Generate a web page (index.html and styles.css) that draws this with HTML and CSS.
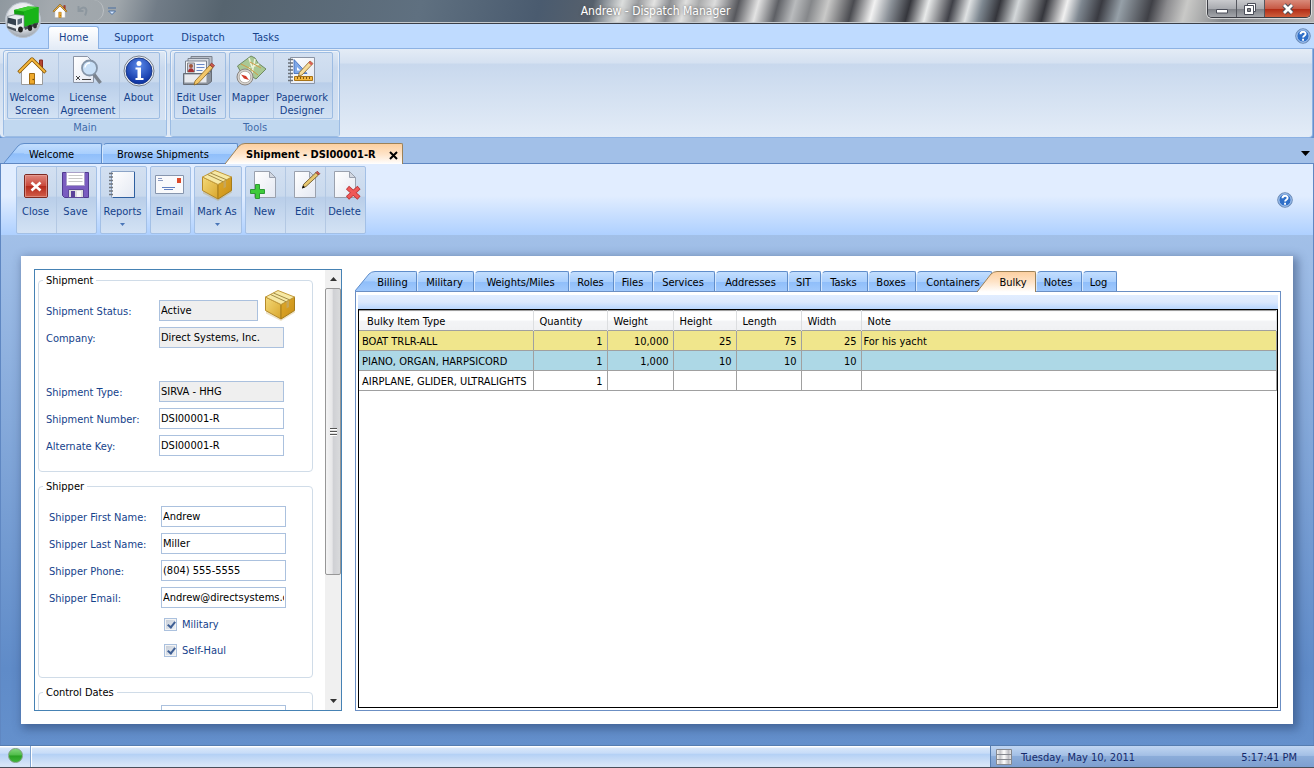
FILE: index.html
```html
<!DOCTYPE html>
<html lang="en">
<head>
    <meta charset="UTF-8">
    <meta name="viewport" content="width=device-width, initial-scale=1.0">
    <title>Andrew - Dispatch Manager</title>
    <link rel="stylesheet" href="styles.css">
</head>
<body>
    <!-- Shared icons and gradients -->
    <svg class="defs" aria-hidden="true">
        <defs>
            <linearGradient id="tabBlue" x1="0" y1="0" x2="0" y2="1">
                <stop offset="0" stop-color="#c3defe"/>
                <stop offset=".5" stop-color="#a9cffd"/>
                <stop offset=".52" stop-color="#8fbefa"/>
                <stop offset="1" stop-color="#9fc8fc"/>
            </linearGradient>
            <linearGradient id="tabOrange" x1="0" y1="0" x2="0" y2="1">
                <stop offset="0" stop-color="#fdd0a0"/>
                <stop offset=".5" stop-color="#fee3c7"/>
                <stop offset="1" stop-color="#ffffff"/>
            </linearGradient>
            <linearGradient id="gold" x1="0" y1="0" x2="1" y2="1">
                <stop offset="0" stop-color="#e0ab2c"/>
                <stop offset="1" stop-color="#c98f18"/>
            </linearGradient>
            <linearGradient id="goldSide" x1="0" y1="0" x2="1" y2="1">
                <stop offset="0" stop-color="#f3d978"/>
                <stop offset="1" stop-color="#d9a62c"/>
            </linearGradient>
            <linearGradient id="paper" x1="0" y1="0" x2="1" y2="1">
                <stop offset="0" stop-color="#ffffff"/>
                <stop offset="1" stop-color="#e4e8f2"/>
            </linearGradient>
            <linearGradient id="red" x1="0" y1="0" x2="0" y2="1">
                <stop offset="0" stop-color="#e08a80"/>
                <stop offset=".5" stop-color="#c9473a"/>
                <stop offset=".52" stop-color="#b52a1c"/>
                <stop offset="1" stop-color="#d2604c"/>
            </linearGradient>
            <radialGradient id="info" cx=".5" cy=".3" r=".7">
                <stop offset="0" stop-color="#5b8bea"/>
                <stop offset="1" stop-color="#0a2fa0"/>
            </radialGradient>
            <radialGradient id="orb" cx=".5" cy=".35" r=".65">
                <stop offset="0" stop-color="#ffffff"/>
                <stop offset=".6" stop-color="#e3e6ea"/>
                <stop offset="1" stop-color="#9aa2ac"/>
            </radialGradient>
        </defs>
        <symbol id="house" viewBox="0 0 32 32">
            <path d="M23.500 5h3v9h-3z" fill="#b5452f" stroke="#8a2a20"/>
            <path d="M5.500 16 16 5.500 26.500 16v13.500h-21z" fill="#fdfdfd" stroke="#9a9a9a"/>
            <path d="M2.500 17.500 16 4l13.500 13.500" fill="none" stroke="#8a5a08" stroke-width="3.400" stroke-linejoin="round"/>
            <path d="M3 17 16 4l13 13" fill="none" stroke="#f6b73c" stroke-width="1.800"/>
            <path d="M13.500 18.500h5V29h-5z" fill="#efa92b" stroke="#a06a10"/>
            <circle cx="17.200" cy="24.500" r=".8" fill="#6a4408"/>
        </symbol>
        <symbol id="box" viewBox="0 0 32 32">
            <path d="M16 1 31 8.500v14L17 31 2 23.500V9z" fill="#b98c1e" opacity=".25" transform="translate(0 1)"/>
            <path d="M1.500 8 17 15.500V30L1.500 21.500z" fill="url(#goldSide)" stroke="#b58a2a"/>
            <path d="M17 15.500 30.500 8v13.500L17 30z" fill="url(#gold)" stroke="#a67c1a"/>
            <path d="M1.500 8 14 1.500 30.500 8 17 15.500z" fill="#f7e9a4" stroke="#c39b3c"/>
            <path d="M6.500 5.500 22 12.700M9.500 4 25.500 10.800" stroke="#a08a48" fill="none"/>
            <path d="M22.500 13l2.500-1.400v6.400l-2.500 1.400z" fill="#c6a65a"/>
        </symbol>
        <symbol id="help" viewBox="0 0 16 16">
            <circle cx="8" cy="8" r="7.300" fill="#2f6fc8" stroke="#7893b8"/>
            <circle cx="8" cy="8" r="6.200" fill="none" stroke="#d5e4f8" stroke-width=".9"/>
            <path d="M5.500 6.200C5.500 3 10.600 3 10.600 6c0 1.800-2.500 1.900-2.500 3.600" fill="none" stroke="#fff" stroke-width="1.900"/>
            <path d="M7.100 10.800H9v1.900H7.100z" fill="#fff"/>
        </symbol>
        <symbol id="page" viewBox="0 0 32 32">
            <path d="M5.500 2.500h15l6 6v20h-21z" fill="url(#paper)" stroke="#9aa1ae"/>
            <path d="M20.500 2.500v6h6z" fill="#d3d8e1" stroke="#9aa1ae"/>
        </symbol>
        <symbol id="slantBlue" viewBox="0 0 20 20" preserveAspectRatio="none">
            <path d="M0 20 14 3Q16.500 .5 20 .5V20z" fill="url(#tabBlue)"/>
            <path d="M0 20 14 3Q16.500 .5 20 .5" fill="none" stroke="#5f8dca"/>
        </symbol>
        <symbol id="slantOrange" viewBox="0 0 20 21" preserveAspectRatio="none">
            <path d="M0 21 14 3Q16.500 .5 20 .5V21z" fill="url(#tabOrange)"/>
            <path d="M0 21 14 3Q16.500 .5 20 .5" fill="none" stroke="#9d8258"/>
        </symbol>
    </svg>

    <!-- Window title bar -->
    <header class="titlebar">
        <div class="quick-access">
            <button class="plain" aria-label="Home"><svg width="16" height="16"><use href="#house"/></svg></button>
            <button class="plain" aria-label="Undo"><svg width="16" height="16" viewBox="0 0 16 16"><path d="M3.500 3v5h5M4 7.500C8 2 14 4.500 10 12.500" fill="none" stroke="#8d979f" stroke-width="2"/></svg></button>
            <button class="plain more" aria-label="More"><svg width="8" height="8" viewBox="0 0 8 8"><path d="M0 1h8M.5 4h7L4 7.500z" fill="#d7e8ff" stroke="#4a6f9f"/></svg></button>
        </div>
        <h1>Andrew - Dispatch Manager</h1>
        <div class="caption">
            <button aria-label="Minimize"><svg width="14" height="14" viewBox="0 0 14 14"><path d="M1.500 7.500h11v3.500h-11z" fill="#fff" stroke="#4a4d58"/></svg></button>
            <button aria-label="Restore"><svg width="14" height="14" viewBox="0 0 14 14"><path d="M4.500 1.500h8v8h-8z" fill="#fff" stroke="#4a4d58"/><path d="M1.500 3.500h9v9h-9z" fill="#fff" stroke="#4a4d58"/><path d="M4.500 6.500h3v3h-3z" fill="#888" stroke="#4a4d58"/></svg></button>
            <button class="caption-close" aria-label="Close window"><svg width="14" height="12" viewBox="0 0 14 12"><path d="M3 2l8 8M11 2l-8 8" stroke="#4a4d58" stroke-width="4.800"/><path d="M3 2l8 8M11 2l-8 8" stroke="#fff" stroke-width="2.800"/></svg></button>
        </div>
    </header>
    <button class="orb" aria-label="Application menu">
        <svg width="38" height="38" viewBox="0 0 38 38">
            <circle cx="19" cy="19" r="17.500" fill="url(#orb)" stroke="#b9c2cc"/>
            <path d="M10 9 24 5.500 34.500 6v15.500L20 26l-9-3z" fill="#12a012"/>
            <path d="M10 9 24 5.500 34.500 6 20 10.500z" fill="#3fce35"/>
            <path d="M20 10.500 34.500 6v15.500L20 26z" fill="#18b418"/>
            <path d="M3.500 15.500 11 13.500l9 1v12.500l-7 3.500-9.500-4z" fill="#e9edf1" stroke="#7b858f" stroke-width=".7"/>
            <path d="M4 16.500 12 18.500v6L3.500 22z" fill="#35424f"/>
            <path d="M13.500 18.500l4.500-1.500v5l-4.500 2z" fill="#586878"/>
            <path d="M3.500 25l8.500 2.800v2.400l-8.500-3.200z" fill="#4b535c"/>
            <path d="M20 26l14-4.500v2L21 29z" fill="#444b52"/>
            <ellipse cx="16.500" cy="28.500" rx="2.400" ry="3" fill="#222"/>
            <ellipse cx="26" cy="27" rx="2.200" ry="3" fill="#222"/>
            <ellipse cx="31" cy="24.800" rx="2" ry="2.600" fill="#333"/>
        </svg>
    </button>

    <!-- Ribbon -->
    <nav class="ribbon-tabs">
        <a href="#" class="ribbon-tab selected">Home</a>
        <a href="#" class="ribbon-tab">Support</a>
        <a href="#" class="ribbon-tab">Dispatch</a>
        <a href="#" class="ribbon-tab">Tasks</a>
        <button class="plain ribbon-help" aria-label="Help"><svg width="16" height="16"><use href="#help"/></svg></button>
    </nav>
    <section class="ribbon">
        <div class="ribbon-group">
            <div class="clusters">
                <div class="cluster main-cluster">
                    <button class="tool"><svg class="icon"><use href="#house"/></svg>Welcome<br>Screen</button>
                    <button class="tool">
                        <svg class="icon" viewBox="0 0 32 32">
                            <path d="M1.500 1.500h14l6 6v20h-20z" fill="url(#paper)" stroke="#8b94a5"/>
                            <path d="M4 21l4 4m0-4-4 4" stroke="#444"/><path d="M10 24.500h9" stroke="#444"/>
                            <circle cx="17.500" cy="13" r="7.500" fill="#c9e0f7" stroke="#8595a8" stroke-width="1.800"/>
                            <path d="M13 12.500a5 5 0 0 1 5-4.500" fill="none" stroke="#fff" stroke-width="1.500"/>
                            <path d="M22 19.500 28.500 28" stroke="#7b838e" stroke-width="3.500"/>
                        </svg>License<br>Agreement</button>
                    <button class="tool">
                        <svg class="icon" viewBox="0 0 32 32">
                            <circle cx="16" cy="16" r="15" fill="#eef1f5" stroke="#77808c"/>
                            <circle cx="16" cy="16" r="13" fill="url(#info)" stroke="#1a3a8a"/>
                            <circle cx="16" cy="8.500" r="2.500" fill="#fff"/>
                            <path d="M12.500 12.500h5.500V23h2.500v2h-8v-2h2v-8.500h-2z" fill="#fff"/>
                        </svg>About</button>
                </div>
            </div>
            <div class="group-name">Main</div>
        </div>
        <div class="ribbon-group">
            <div class="clusters">
                <div class="cluster edit-cluster">
                    <button class="tool">
                        <svg class="icon" viewBox="0 0 32 32">
                            <path d="M8 1.500h21v13H8z" fill="#b8bec8" stroke="#7a828e"/>
                            <path d="M5 3.500h21v13H5z" fill="#d4d9e0" stroke="#7a828e"/>
                            <path d="M2.500 6h21v13h-21z" fill="#f5f7fa" stroke="#7a828e"/>
                            <path d="M4.500 8h7v9h-7z" fill="#ccd" stroke="#888"/>
                            <circle cx="8" cy="11" r="2" fill="#a0583a"/><path d="M5 17c0-5 6-5 6 0z" fill="#a83030"/>
                            <path d="M13.500 9.500h8M13.500 12.500h8M13.500 15.500h6" stroke="#6788c8"/>
                            <path d="M.5 18.500h26l2-4v12l-4 3H.5z" fill="#8b929c" stroke="#666d77"/>
                            <path d="M1.500 19.500h22v8h-22z" fill="#e8eaee"/>
                            <path d="M27 10l3 2.500-15 16-4 1.500 1-4z" fill="#f3c76a" stroke="#8a6520" stroke-width=".8"/>
                            <path d="M27 10l3 2.500 1.500-2-3-2.500z" fill="#d05a50" stroke="#8a3a30" stroke-width=".8"/>
                        </svg>Edit User<br>Details</button>
                </div>
                <div class="cluster map-cluster">
                    <button class="tool">
                        <svg class="icon" viewBox="0 0 32 32">
                            <path d="M2.500 11 16 1l4 2 3 5 8 6-10 10-5-3-7 2z" fill="#a9c894" stroke="#6f8a63"/>
                            <path d="M14 3l3 9 7-3M15 12l-4 9M20 4l-3 14" stroke="#eef3d8" fill="none" stroke-width="1.500"/>
                            <path d="M6 9l8 4 9 7M15 7l11 6" stroke="#cf9a45" fill="none"/>
                            <circle cx="10" cy="22" r="8" fill="#d5d2cf" stroke="#8a8580"/>
                            <circle cx="10" cy="22" r="5.800" fill="#fff" stroke="#b7b1aa"/>
                            <path d="M6 19.500l5 1.500 3 4-5-1.500z" fill="#d23a2a"/>
                        </svg>Mapper</button>
                    <button class="tool">
                        <svg class="icon" viewBox="0 0 32 32">
                            <path d="M4.500 2.500h24v26h-24z" fill="url(#paper)" stroke="#8b94a5"/>
                            <path d="M2 4.500h5M2 8h5M2 11.500h5M2 15h5M2 18.500h5M2 22h5M2 25.500h5" stroke="#6a7078" stroke-width="1.500"/>
                            <path d="M8 4.500v14h13z" fill="#7fa8e8" stroke="#3a68b8" stroke-width=".8"/><path d="M11 12v3.500h3.500z" fill="#fff"/>
                            <path d="M8.500 21.500h18v4h-18z" fill="#f5b840" stroke="#a87418"/>
                            <path d="M11.500 22v2M14.500 22v2M17.500 22v2M20.500 22v2M23.500 22v2" stroke="#805510"/>
                            <path d="M24 6l3 2.500-11 11.500-3.500 1 .8-3.500z" fill="#f6dc9a" stroke="#8a6520" stroke-width=".8"/><path d="M24 6l3 2.500-1.500 2-3-2.500z" fill="#d86058"/>
                        </svg>Paperwork<br>Designer</button>
                </div>
            </div>
            <div class="group-name">Tools</div>
        </div>
    </section>

    <!-- Document tabs -->
    <nav class="doc-tabs">
        <a href="#" class="tab slanted"><svg class="cap"><use href="#slantBlue"/></svg><span>Welcome</span></a>
        <a href="#" class="tab">Browse Shipments</a>
        <a href="#" class="tab slanted active"><svg class="cap"><use href="#slantOrange"/></svg><span>Shipment - DSI00001-R <svg class="tab-close" width="9" height="9" viewBox="0 0 9 9"><path d="M1 1l7 7M8 1 1 8" stroke="#000" stroke-width="2"/></svg></span></a>
        <button class="plain tab-list" aria-label="Open tabs"><svg width="9" height="5" viewBox="0 0 9 5"><path d="M0 0h9L4.500 5z"/></svg></button>
    </nav>

    <!-- Shipment toolbar -->
    <section class="toolbar">
        <div class="cluster two">
            <button class="tool">
                <svg class="icon" viewBox="0 0 32 32"><rect x="4.500" y="5.500" width="23" height="23" rx="1.500" fill="url(#red)" stroke="#7d2a22"/><rect x="5.500" y="6.500" width="21" height="21" fill="none" stroke="#eaa89e" stroke-opacity=".6"/><path d="M11.500 13.500l9 8M20.500 13.500l-9 8" stroke="#fff" stroke-width="2.600"/></svg>Close</button>
            <button class="tool">
                <svg class="icon" viewBox="0 0 32 32"><path d="M2.500 3.500h26v25h-24l-2-2z" fill="#7a5cc0" stroke="#4f3a8f"/><path d="M6.500 3.500h18v13h-18z" fill="#fff" stroke="#a9a0c8"/><path d="M8.500 6.500h14M8.500 9.500h14M8.500 12.500h14" stroke="#c8c8c8"/><path d="M8.500 20.500h15v8h-15z" fill="#ddd" stroke="#5d4a99"/><path d="M11 22h4v6h-4z" fill="#5a429a"/><path d="M17 22h4v6h-4z" fill="#f6f6f6"/></svg>Save</button>
        </div>
        <div class="cluster reports">
            <button class="tool">
                <svg class="icon" viewBox="0 0 32 32"><path d="M4.500 2.500h23v26h-23z" fill="url(#paper)" stroke="#8ba3c6"/><path d="M27.500 3v25.500H6" fill="none" stroke="#2e5f9f"/><path d="M2 4.500h4M2 8h4M2 11.500h4M2 15h4M2 18.500h4M2 22h4M2 25.500h4" stroke="#70767e" stroke-width="1.600"/></svg>Reports
                <svg class="arrow" viewBox="0 0 5 3"><path d="M0 0h5L2.500 3z" fill="#4a76b8"/></svg></button>
        </div>
        <div class="cluster email">
            <button class="tool">
                <svg class="icon" viewBox="0 0 32 32"><path d="M1.500 6.500h28v18h-28z" fill="#f9fafc" stroke="#8796ae"/><path d="M4 9.500h4M4 11.500h5" stroke="#8a9ac0"/><path d="M8 18.500h13M10 20.500h9" stroke="#5f7fc0"/><path d="M23 9h4v5h-4z" fill="#dc4a2a"/></svg>Email</button>
        </div>
        <div class="cluster mark">
            <button class="tool"><svg class="icon"><use href="#box"/></svg>Mark As
                <svg class="arrow" viewBox="0 0 5 3"><path d="M0 0h5L2.500 3z" fill="#4a76b8"/></svg></button>
        </div>
        <div class="cluster three">
            <button class="tool">
                <svg class="icon" viewBox="0 0 32 32"><use href="#page"/><path d="M7.500 16.500h4v5h5v4h-5v5h-4v-5h-5v-4h5z" transform="translate(-1 -1)" fill="#3ecb3a" stroke="#2f9a35"/></svg>New</button>
            <button class="tool">
                <svg class="icon" viewBox="0 0 32 32"><use href="#page"/><path d="M27 3.500l2.500 2.500L17 17.500 13.500 19l1.200-3.800z" fill="#e8c870" stroke="#5f4a20" stroke-width=".8"/><path d="M27 3.500l1.300-1.300 2.500 2.500L29.500 6z" fill="#d2554a" stroke="#8a3a30" stroke-width=".8"/><path d="M13 19.500l3-1.200-2-1.800z"/></svg>Edit</button>
            <button class="tool">
                <svg class="icon" viewBox="0 0 32 32"><use href="#page"/><path d="M18.500 18.500l11.500 10.500M30 18.500 18.500 29" stroke="#b53434" stroke-width="4.600"/><path d="M19 19l10.500 9.500M29.500 19 19 28.500" stroke="#f05858" stroke-width="3.200"/></svg>Delete</button>
        </div>
        <button class="plain toolbar-help" aria-label="Shipment help"><svg width="16" height="16"><use href="#help"/></svg></button>
    </section>

    <!-- Workspace -->
    <main class="workspace">
        <div class="sheet">
            <aside class="details">
                <form class="details-form">
                    <fieldset>
                        <legend>Shipment</legend>
                        <div class="field">
                            <label for="status">Shipment Status:</label>
                            <input type="text" id="status" class="short" value="Active" readonly>
                            <svg class="status-icon" width="32" height="32"><use href="#box"/></svg>
                        </div>
                        <div class="field">
                            <label for="company">Company:</label>
                            <input type="text" id="company" value="Direct Systems, Inc." readonly>
                        </div>
                        <div class="field spaced">
                            <label for="type">Shipment Type:</label>
                            <input type="text" id="type" value="SIRVA - HHG" readonly>
                        </div>
                        <div class="field">
                            <label for="number">Shipment Number:</label>
                            <input type="text" id="number" value="DSI00001-R">
                        </div>
                        <div class="field">
                            <label for="altkey">Alternate Key:</label>
                            <input type="text" id="altkey" value="DSI00001-R">
                        </div>
                    </fieldset>
                    <fieldset class="indented">
                        <legend>Shipper</legend>
                        <div class="field">
                            <label for="first">Shipper First Name:</label>
                            <input type="text" id="first" value="Andrew">
                        </div>
                        <div class="field">
                            <label for="last">Shipper Last Name:</label>
                            <input type="text" id="last" value="Miller">
                        </div>
                        <div class="field">
                            <label for="phone">Shipper Phone:</label>
                            <input type="text" id="phone" value="(804) 555-5555">
                        </div>
                        <div class="field">
                            <label for="mail">Shipper Email:</label>
                            <input type="text" id="mail" value="Andrew@directsystems.com">
                        </div>
                        <div class="checks">
                            <label><input type="checkbox" checked> Military</label>
                            <label><input type="checkbox" checked> Self-Haul</label>
                        </div>
                    </fieldset>
                    <fieldset class="indented dates">
                        <legend>Control Dates</legend>
                        <div class="field">
                            <span></span>
                            <input type="text" aria-label="Control date">
                        </div>
                    </fieldset>
                </form>
                <div class="scrollbar">
                    <div class="scroll-end"><svg width="7" height="4" viewBox="0 0 7 4"><path d="M0 4h7L3.500 0z" fill="#333"/></svg></div>
                    <div class="thumb"><i></i></div>
                    <div class="track"></div>
                    <div class="scroll-end"><svg width="7" height="4" viewBox="0 0 7 4"><path d="M0 0h7L3.500 4z" fill="#333"/></svg></div>
                </div>
            </aside>

            <section class="records">
                <nav class="record-tabs">
                    <a href="#" class="tab slanted"><svg class="cap"><use href="#slantBlue"/></svg><span>Billing</span></a>
                    <a href="#" class="tab">Military</a>
                    <a href="#" class="tab">Weights/Miles</a>
                    <a href="#" class="tab">Roles</a>
                    <a href="#" class="tab">Files</a>
                    <a href="#" class="tab">Services</a>
                    <a href="#" class="tab">Addresses</a>
                    <a href="#" class="tab">SIT</a>
                    <a href="#" class="tab">Tasks</a>
                    <a href="#" class="tab">Boxes</a>
                    <a href="#" class="tab">Containers</a>
                    <a href="#" class="tab slanted active"><svg class="cap"><use href="#slantOrange"/></svg><span>Bulky</span></a>
                    <a href="#" class="tab">Notes</a>
                    <a href="#" class="tab">Log</a>
                </nav>
                <div class="record-body">
                    <div class="record-strip"></div>
                    <div class="grid-box">
                        <table>
                            <colgroup>
                                <col class="col-type"><col class="col-qty"><col class="col-weight"><col class="col-height"><col class="col-length"><col class="col-width"><col>
                            </colgroup>
                            <thead>
                                <tr><th>Bulky Item Type</th><th>Quantity</th><th>Weight</th><th>Height</th><th>Length</th><th>Width</th><th>Note</th></tr>
                            </thead>
                            <tbody>
                                <tr class="khaki"><td>BOAT TRLR-ALL</td><td>1</td><td>10,000</td><td>25</td><td>75</td><td>25</td><td>For his yacht</td></tr>
                                <tr class="aqua"><td>PIANO, ORGAN, HARPSICORD</td><td>1</td><td>1,000</td><td>10</td><td>10</td><td>10</td><td></td></tr>
                                <tr><td>AIRPLANE, GLIDER, ULTRALIGHTS</td><td>1</td><td></td><td></td><td></td><td></td><td></td></tr>
                            </tbody>
                        </table>
                    </div>
                </div>
            </section>
        </div>
    </main>

    <!-- Status bar -->
    <footer class="statusbar">
        <div class="status-light"><span></span></div>
        <div class="status-main"></div>
        <div class="status-clock">
            <svg width="16" height="16" viewBox="0 0 16 16"><defs><linearGradient id="drum"><stop offset="0" stop-color="#f8f8f8"/><stop offset=".25" stop-color="#c4c4c8"/><stop offset=".5" stop-color="#fff"/><stop offset=".8" stop-color="#bcbcc2"/><stop offset="1" stop-color="#eee"/></linearGradient></defs><path d="M.5.500h15v15H.5z" fill="url(#drum)" stroke="#85888f"/><path d="M1 5.500h14M1 10.500h14" stroke="#85888f"/></svg>
            <span>Tuesday, May 10, 2011</span>
            <span class="time">5:17:41 PM</span>
        </div>
    </footer>
</body>
</html>
```
FILE: styles.css
```css
* {
    box-sizing: border-box;
}

body {
    font-family: Tahoma, 'DejaVu Sans Condensed', 'DejaVu Sans', sans-serif;
    font-size: 11px;
    line-height: 13px;
    margin: 0;
    height: 100vh;
    display: flex;
    flex-direction: column;
    overflow: hidden;
    color: #000;
    background-color: #6490cc;
}

button,
input {
    font: inherit;
    color: inherit;
}

button {
    cursor: pointer;
}

a {
    color: inherit;
    text-decoration: none;
}

svg {
    display: block;
}

.defs {
    position: absolute;
    width: 0;
    height: 0;
}

.plain {
    border: none;
    padding: 0;
    background: none;
}

/* Title bar with the glass backdrop */
.titlebar {
    flex: none;
    height: 24px;
    display: flex;
    align-items: flex-start;
    position: relative;
    border-bottom: 1px solid #3a3f48;
    box-shadow: inset 0 -1px #c5c9cc;
    background: linear-gradient(105deg, #8f989f 0, #a3a9ae 4%, #9fa6ab 9%, #717c87 12%, #56646f 17%, #5f7080 32%, #4a5b6f 41%, #56606c 45%, #dcdedd 47.200%, #9a9c9f 48.400%, #e3e3e2 49.600%, #8d8f93 50.800%, #e0e0df 52%, #a9aaab 53%, #dddddd 54.200%, #57585d 56%, #e3e3e3 57.500%, #5e6065 59%, #b9bbbd 60.300%, #85878a 61.500%, #c9c9c8 62.800%, #4a4b50 64.700%, #f2f2f2 66.300%, #8a9097 67.600%, #35363c 69%, #e8eaea 70.400%, #3f4047 72.200%, #dfe2e3 73.500%, #7d8790 74.500%, #34353b 75.800%, #d3d7d9 77.200%, #35363c 79.300%, #f0f0f0 80.900%, #7e8790 82%, #393a41 83.500%, #96a0a8 85%, #3f4046 87.300%, #8d8d90 88.500%, #c9c9c7 90%, #85878a 93%, #b4b4b4 100%);
}

.titlebar h1 {
    flex: 1;
    margin: 0;
    padding-top: 4px;
    font-size: 12px;
    line-height: 14px;
    font-weight: normal;
    text-align: center;
    color: #fff;
    text-shadow: 0 0 3px #555;
}

.quick-access {
    display: flex;
    align-items: center;
    gap: 7px;
    width: 104px;
    height: 21px;
    padding-left: 52px;
    border-right: 1px solid rgba(255, 255, 255, 0.3);
    border-radius: 0 11px 11px 0;
}

.quick-access .more {
    position: absolute;
    left: 108px;
}

.caption {
    display: flex;
    width: 104px;
    margin-right: 3px;
    height: 18px;
    border: 1px solid #3b3d44;
    border-top: none;
    border-radius: 0 0 5px 5px;
    overflow: hidden;
    box-shadow: 0 0 0 1px rgba(255, 255, 255, 0.6);
}

.caption button {
    flex: 29;
    display: flex;
    align-items: center;
    justify-content: center;
    border: none;
    border-right: 1px solid #55575e;
    padding: 0;
    background: linear-gradient(#c9cacd, #a9abb0 50%, #7d8086 52%, #a4a6ab);
}

.caption .caption-close {
    flex: 47;
    border-right: none;
    background: linear-gradient(#d98b7b, #c75a46 50%, #b02a14 52%, #cf5e3c);
}

/* Application button sits over the title bar and the tabs */
.orb {
    position: absolute;
    left: 4px;
    top: 1px;
    border: none;
    padding: 0;
    background: none;
    z-index: 3;
}

/* Ribbon tabs */
.ribbon-tabs {
    flex: none;
    height: 25px;
    display: flex;
    align-items: flex-end;
    padding: 0 3px 0 48px;
    color: #15428b;
    background-color: #bfdbff;
    border-bottom: 1px solid #8db2e3;
}

.ribbon-tab {
    padding: 5px 13px 4px 15px;
}

.ribbon-tab.selected {
    padding: 4px 10px 5px;
    margin-bottom: -1px;
    border: 1px solid #8db2e3;
    border-bottom: none;
    border-radius: 3px 3px 0 0;
    background: linear-gradient(#ffffff, #e3ebf6);
}

.ribbon-help {
    margin: 0 0 4px auto;
}

/* Ribbon groups */
.ribbon {
    flex: none;
    height: 89px;
    display: flex;
    align-items: flex-start;
    gap: 3px;
    margin-right: 1px;
    padding: 1px 3px;
    border: 1px solid #8db2e3;
    border-top: none;
    border-left: none;
    border-radius: 0 0 4px 4px;
    background: linear-gradient(#e4ecf6, #d5e1f1 16%, #c8d8ed 17%, #e3ecf7);
}

.ribbon-group {
    border: 1px solid #9cbce3;
    border-radius: 3px;
    background: linear-gradient(#dfe9f5, #c9d9ee 20%, #d9e5f4);
    box-shadow: inset 0 0 0 1px rgba(255, 255, 255, 0.5);
}

.clusters {
    display: flex;
    gap: 3px;
    padding: 1px 6px 1px 3px;
}

.cluster {
    display: grid;
    border: 1px solid #9dbce2;
    border-radius: 2px;
    background: linear-gradient(#d3e0f1, #c9d9ed 44%, #b9cee9 46%, #d3e2f4);
}

.main-cluster {
    grid-template-columns: 50px 61px 40px;
}

.edit-cluster {
    grid-template-columns: 50px;
}

.map-cluster {
    grid-template-columns: 43px 59px;
}

.group-name {
    height: 16px;
    padding-top: 1px;
    text-align: center;
    color: #3e6aaa;
    background-color: #c1d8f0;
}

.tool {
    display: flex;
    flex-direction: column;
    align-items: center;
    height: 65px;
    border: none;
    border-left: 1px solid #b3c8e3;
    padding: 2px 2px 0 0;
    white-space: nowrap;
    color: #15428b;
    background: none;
}

.tool:first-child {
    border-left: none;
}

.icon {
    flex: none;
    width: 32px;
    height: 32px;
    margin-bottom: 4px;
}

/* Tabs shared by the document strip and the record strip */
.tab {
    display: block;
    height: 20px;
    padding: 4px 2px 0 0;
    text-align: center;
    white-space: nowrap;
    border: 1px solid #5f8dca;
    border-bottom: none;
    border-left-color: #d3e6fd;
    border-radius: 5px 2px 0 0;
    background: linear-gradient(#c3defe, #a9cffd 50%, #8fbefa 52%, #9fc8fc);
}

.tab.slanted {
    display: flex;
    padding: 0;
    border: none;
    background: none;
}

.tab.slanted span {
    flex: 1;
    padding: 4px 6px 0 0;
    border: 1px solid #5f8dca;
    border-width: 1px 1px 0 0;
    border-radius: 0 2px 0 0;
    background: linear-gradient(#c3defe, #a9cffd 50%, #8fbefa 52%, #9fc8fc);
}

.tab.active {
    position: relative;
    z-index: 1;
    height: 21px;
}

.tab.active span {
    border-color: #9d8258;
    background: linear-gradient(#fdd0a0, #fee3c7 50%, #ffffff);
}

.cap {
    flex: none;
    width: 20px;
    height: 100%;
}

.doc-tabs {
    flex: none;
    height: 26px;
    display: grid;
    grid-template-columns: 98px 136px 165px 1fr;
    align-items: end;
    padding: 0 4px;
    background-color: #a2c0e8;
    border-bottom: 1px solid #5f87c2;
}

.doc-tabs .tab {
    padding-left: 14px;
    text-align: left;
}

.doc-tabs .slanted {
    padding-left: 0;
}

.doc-tabs .slanted span {
    padding-left: 5px;
}

.doc-tabs .active {
    margin: 0 0 -1px -13px;
    font-weight: bold;
}

.doc-tabs .active span {
    display: flex;
    justify-content: space-between;
    align-items: flex-start;
    padding: 4px 4px 0 1px;
}

.tab-close {
    margin-top: 3px;
}

.tab-list {
    justify-self: end;
    align-self: center;
    padding-top: 6px;
}

/* Shipment toolbar */
.toolbar {
    flex: none;
    height: 71px;
    display: flex;
    align-items: flex-start;
    gap: 3px;
    padding: 2px 20px 0 15px;
    border: 1px solid #5f87c2;
    border-width: 0 1px;
    background: linear-gradient(#e1edff, #e1edff 45%, #aed0ff);
}

.toolbar .cluster {
    border-color: #a3c0e6;
}

.toolbar .tool {
    height: 66px;
}

.two,
.three {
    grid-auto-flow: column;
    grid-auto-columns: 40px;
}

.two {
    grid-auto-columns: 39px 40px;
}

.three {
    grid-auto-columns: 39px 40px 40px;
}

.reports {
    grid-template-columns: 45px;
}

.email {
    grid-template-columns: 39px;
}

.mark {
    grid-template-columns: 46px;
}

.arrow {
    width: 5px;
    height: 3px;
    margin-top: 5px;
}

.toolbar-help {
    margin: 26px 0 0 auto;
}

/* Workspace */
.workspace {
    flex: 1;
    min-height: 0;
    display: flex;
    padding: 21px 20px;
    border: 1px solid #5f87c2;
    border-width: 0 1px;
    background: linear-gradient(#a2c0e8, #5f8bc8 85%, #6490cc);
}

.sheet {
    flex: 1;
    min-width: 0;
    display: flex;
    gap: 13px;
    padding: 13px 12px 13px 13px;
    background-color: #fff;
    box-shadow: 3px 3px 9px 2px rgba(30, 50, 90, 0.45);
}

.details {
    flex: none;
    width: 308px;
    display: flex;
    overflow: hidden;
    border: 1px solid #4682b4;
}

.details-form {
    flex: 1;
    padding: 4px 12px 0 3px;
}

fieldset {
    min-width: 0;
    margin: 0 0 8px;
    padding: 13px 7px 15px;
    border: 1px solid #d0dce8;
    border-radius: 4px;
}

fieldset.indented {
    padding-left: 10px;
}

fieldset.dates {
    padding-top: 6px;
}

legend {
    margin-left: -3px;
    padding: 0 3px;
}

.indented legend {
    margin-left: -6px;
}

.field {
    position: relative;
    display: grid;
    grid-template-columns: 113px 125px;
    align-items: center;
    margin-bottom: 6px;
    color: #15428b;
}

.indented .field {
    grid-template-columns: 112px 125px;
}

.field label {
    padding-top: 1px;
}

.field:last-child {
    margin-bottom: 0;
}

.field.spaced {
    margin-top: 33px;
}

.field input {
    width: 100%;
    height: 21px;
    padding: 0 1px;
    border: 1px solid #abc1de;
    border-radius: 0;
    color: #000;
    background-color: #fff;
}

.field input:read-only {
    background-color: #efefef;
}

.field input.short {
    width: 99px;
}

.status-icon {
    position: absolute;
    right: 9px;
    bottom: 0;
}

.checks {
    display: flex;
    flex-direction: column;
    gap: 13px;
    padding: 4px 0 5px 115px;
    color: #15428b;
}

.checks label {
    display: flex;
    align-items: center;
    gap: 5px;
}

.checks input {
    appearance: none;
    width: 13px;
    height: 13px;
    margin: 0;
    border: 1px solid #abc1de;
    background: linear-gradient(135deg, #c4cbd6, #eef2f7);
    box-shadow: inset 0 0 0 1px #f4f4f4;
}

.checks input:checked::after {
    content: "";
    display: block;
    width: 3px;
    height: 6px;
    margin: 1px 0 0 4px;
    border: solid #3f5f94;
    border-width: 0 2px 2px 0;
    transform: rotate(38deg);
}

/* Scroll bar of the details pane */
.scrollbar {
    flex: none;
    width: 16px;
    display: flex;
    flex-direction: column;
    background-color: #f0f0f0;
}

.scroll-end {
    height: 18px;
    display: flex;
    align-items: center;
    justify-content: center;
}

.thumb {
    flex: 71;
    display: flex;
    align-items: center;
    justify-content: center;
    border: 1px solid #979797;
    border-radius: 2px;
    background: linear-gradient(90deg, #f4f4f4, #e6e6e8 45%, #cfd0d4 50%, #d9dadc);
}

.thumb i {
    width: 7px;
    height: 8px;
    background: repeating-linear-gradient(#555 0 1px, #fff 1px 2px, #ddd 2px 3px);
}

.track {
    flex: 29;
}

/* Record tabs and the grid */
.records {
    flex: 1;
    min-width: 0;
    display: flex;
    flex-direction: column;
    padding-top: 2px;
}

.record-tabs {
    flex: none;
    display: grid;
    grid-template-columns: 62px 57px 95px 45px 39px 62px 73px 33px 47px 48px 76px 44px 46px 35px;
}

.record-tabs .active {
    margin: 0 0 -1px -15px;
}

.record-body {
    flex: 1;
    min-height: 0;
    display: flex;
    flex-direction: column;
    padding: 3px 2px 2px;
    border: 1px solid #6b8fc4;
}

.record-strip {
    flex: none;
    height: 14px;
    background: linear-gradient(#e1edff, #dce9fe 50%, #b8d6ff);
}

.grid-box {
    flex: 1;
    border: 1px solid #000;
    background-color: #fff;
}

table {
    width: 100%;
    table-layout: fixed;
    border-collapse: collapse;
}

.col-type {
    width: 174px;
}

.col-qty {
    width: 74px;
}

.col-weight {
    width: 66px;
}

.col-height {
    width: 63px;
}

.col-length {
    width: 65px;
}

.col-width {
    width: 60px;
}

th {
    height: 20px;
    padding: 1px 6px 0;
    text-align: left;
    font-weight: normal;
    border-top: 1px solid #a0a0a0;
    border-right: 1px solid #dcdee0;
    background: linear-gradient(#ffffff 45%, #f3f4f6 46%, #f0f1f3);
}

th:first-child {
    padding-left: 8px;
}

td {
    height: 20px;
    padding: 1px 4px 0 2px;
    text-align: right;
    white-space: nowrap;
    border: 1px solid #a0a0a0;
}

td:first-child,
td:last-child {
    text-align: left;
}

td:first-child {
    border-left: none;
    padding-left: 3px;
}

.khaki {
    background-color: #f0e68c;
}

.aqua {
    background-color: #add8e6;
}

/* Status bar */
.statusbar {
    flex: none;
    height: 23px;
    display: flex;
    border-top: 1px solid #567db0;
    border-bottom: 1px solid #4a4f5a;
    color: #15296b;
    background: linear-gradient(#ffffff 0, #ffffff 1px, #d7e6f9 2px, #c7dcf8 35%, #b3d0f5 38%, #d7e5f7 90%);
}

.status-light {
    width: 31px;
    padding: 2px 0 0 8px;
    border-right: 1px solid #7fa3d0;
}

.status-light span {
    display: block;
    width: 15px;
    height: 15px;
    border: 1px solid #7f9f80;
    border-radius: 50%;
    background: linear-gradient(#7fd67a, #4fbb48 48%, #28a022 52%, #3fb53a);
}

.status-main {
    flex: 1;
    border-left: 1px solid #fff;
}

.status-clock {
    display: flex;
    align-items: center;
    width: 324px;
    padding: 0 17px 0 5px;
    gap: 9px;
    border-left: 1px solid #567db0;
    background: linear-gradient(#c0d6f2, #a3bfe5 45%, #8bacd9 50%, #7d9fd0);
}

.status-clock span {
    padding-top: 1px;
}

.time {
    margin-left: auto;
}
```
